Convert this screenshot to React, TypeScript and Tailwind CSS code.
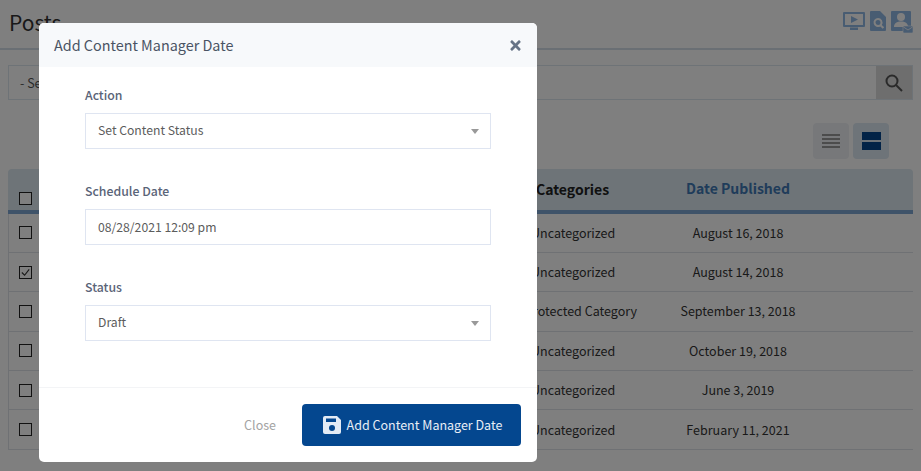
import { FaTimes } from 'react-icons/fa'

const rows = [
  { category: 'Uncategorized', date: 'August 16, 2018', checked: false, indent: 'pl-[14px]' },
  { category: 'Uncategorized', date: 'August 14, 2018', checked: true, indent: 'pl-[14px]' },
  { category: 'Protected Category', date: 'September 13, 2018', checked: false, indent: 'pl-[8px]' },
  { category: 'Uncategorized', date: 'October 19, 2018', checked: false, indent: 'pl-[14px]' },
  { category: 'Uncategorized', date: 'June 3, 2019', checked: false, indent: 'pl-[14px]' },
  { category: 'Uncategorized', date: 'February 11, 2021', checked: false, indent: 'pl-[14px]' },
]

function Checkbox({ checked = false }: { checked?: boolean }) {
  return (
    <span className="flex h-[13px] w-[13px] items-center justify-center border border-[#222] bg-[#fff]">
      {checked && (
        <svg viewBox="0 0 12 12" className="h-[11px] w-[11px]" fill="none" stroke="#333" strokeWidth="1.2">
          <path d="M2 6l3 3 5-6.500" />
        </svg>
      )}
    </span>
  )
}

function HeaderIcons() {
  return (
    <div className="flex items-start gap-[5px] text-[#90b8e4]">
      <svg width="22" height="19" viewBox="0 0 22 19" fill="currentColor" className="mt-[1px]">
        <path fillRule="evenodd" d="M1 0h20a1 1 0 0 1 1 1v13a1 1 0 0 1-1 1H1a1 1 0 0 1-1-1V1a1 1 0 0 1 1-1zm1 2v11h18V2zM8 4l7 3.500L8 11zM7 15.500h8V18H7z" />
      </svg>
      <svg width="16" height="20" viewBox="0 0 16 20" fill="currentColor">
        <path fillRule="evenodd" d="M1 0h9l6 6v13a1 1 0 0 1-1 1H1a1 1 0 0 1-1-1V1a1 1 0 0 1 1-1zm7 7a4.500 4.500 0 1 0 2.300 8.400l2.400 2.400 1.500-1.500-2.400-2.400A4.500 4.500 0 0 0 8 7zm0 2a2.500 2.500 0 1 1 0 5 2.500 2.500 0 0 1 0-5z" />
      </svg>
      <svg width="22" height="22" viewBox="0 0 22 22">
        <path fill="currentColor" d="M1 0h18a1 1 0 0 1 1 1v18a1 1 0 0 1-1 1H1a1 1 0 0 1-1-1V1a1 1 0 0 1 1-1z" />
        <circle cx="10" cy="6" r="4" fill="#fff" />
        <path fill="#fff" d="M3 16c0-4 3-5.500 7-5.500s7 1.500 7 5.500z" />
        <rect x="12" y="15" width="10" height="7" rx="1" fill="#90b8e4" stroke="#fff" strokeWidth="0.6" />
        <path d="M12.500 16l4.500 3 4.500-3" fill="none" stroke="#fff" strokeWidth="0.8" />
      </svg>
    </div>
  )
}

function PostsPage() {
  return (
    <div className="h-[471px] overflow-hidden bg-white text-[#222]">
      <div className="flex h-[50px] items-start justify-between border-b-2 border-[#d5dfe8] pl-[9px] pr-[8px] pt-[11px]">
        <h1 className="text-[21px] leading-[23px] text-[#333]">Posts</h1>
        <HeaderIcons />
      </div>

      <div className="mx-[8px] mt-[15px] flex h-[35px] border border-[#dde6ef]">
        <div className="flex-1 pl-[11px] text-[12.500px] leading-[33px] text-[#555]">- Select -</div>
        <div className="flex w-[36px] items-center justify-center bg-[#dcdcdc]">
          <svg width="18" height="18" viewBox="0 0 18 18" fill="none" stroke="#555" strokeWidth="2">
            <circle cx="7" cy="7" r="5.500" />
            <path d="M11 11l6 6" />
          </svg>
        </div>
      </div>

      <div className="mr-[32px] mt-[23px] flex justify-end gap-[4px]">
        <div className="flex h-[36px] w-[36px] flex-col items-center justify-center gap-[2px] rounded-[4px] bg-[#eef1f4]">
          <span className="h-[2px] w-[18px] bg-[#999]" />
          <span className="h-[2px] w-[18px] bg-[#999]" />
          <span className="h-[2px] w-[18px] bg-[#999]" />
          <span className="h-[2px] w-[18px] bg-[#999]" />
        </div>
        <div className="flex h-[36px] w-[36px] flex-col items-center justify-center gap-[2px] rounded-[4px] bg-[#dce8f2]">
          <span className="h-[8px] w-[19px] bg-[#04478f]" />
          <span className="h-[8px] w-[19px] bg-[#04478f]" />
        </div>
      </div>

      <div className="mx-[8px] mt-[10px] rounded-t-[4px]">
        <div className="flex h-[44.500px] items-center rounded-t-[4px] border-b-[4px] border-[#7fa6d2] bg-[#dce8f0] font-semibold">
          <div className="w-[508px] pl-[11px] pt-[18px]">
            <Checkbox />
          </div>
          <div className="w-[142px] pl-[20px] text-[14px] leading-[20px] text-[#222]">Categories</div>
          <div className="w-[160px] pb-[3px] text-center text-[14px] leading-[20px] text-[#3f78b5]">Date Published</div>
        </div>
        {rows.map((row) => (
          <div key={row.date} className="flex h-[39.400px] items-center border-b border-l border-[#dfe3e8] text-[12.500px]">
            <div className="w-[508px] pl-[10px]">
              <Checkbox checked={row.checked} />
            </div>
            <div className={`w-[142px] whitespace-nowrap leading-[20px] text-[#333] ${row.indent}`}>{row.category}</div>
            <div className="w-[158px] whitespace-nowrap text-center leading-[20px] text-[#333]">{row.date}</div>
          </div>
        ))}
      </div>
    </div>
  )
}

function Field({ label, value, select = false }: { label: string; value: string; select?: boolean }) {
  return (
    <div className="mb-[33px]">
      <label className="mb-[9px] block text-[12.300px] font-medium leading-[18px] text-[#5a6478]">{label}</label>
      <div className={`relative h-[36px] border border-[#dfe5f1] pl-[12px] text-[12.200px] text-[#5c5c5c] ${select ? 'leading-[33px]' : 'leading-[35px]'}`}>
        {value}
        {select && (
          <span className="absolute right-[11px] top-[15px] h-0 w-0 border-x-[4px] border-t-[5px] border-x-transparent border-t-[#999]" />
        )}
      </div>
    </div>
  )
}

function ScheduleModal() {
  return (
    <div className="absolute inset-0 bg-black/50 pl-[39px] pt-[23px]">
      <div className="flex h-[439px] w-[498px] flex-col overflow-hidden rounded-[5px] bg-white">
        <div className="flex h-[44px] items-center justify-between bg-[#f7f9fb] pl-[15px] pr-[14px]">
          <h2 className="text-[14.400px] leading-[20px] text-[#4a5464]">Add Content Manager Date</h2>
          <FaTimes className="h-[15px] w-[15px] text-[#667386]" />
        </div>
        <div className="h-[321px] border-b border-[#f3f4f6] px-[46px] pt-[19px]">
          <Field label="Action" value="Set Content Status" select />
          <Field label="Schedule Date" value="08/28/2021 12:09 pm" />
          <Field label="Status" value="Draft" select />
        </div>
        <div className="flex flex-1 items-start justify-end pr-[16px] pt-[16px]">
          <span className="mr-[26px] mt-[11px] text-[12.500px] leading-[20px] text-[#a3a3a3]">Close</span>
          <button className="flex h-[42px] w-[219px] items-center justify-center gap-[6px] rounded-[4px] bg-[#04478f] pl-[2px] text-[12.500px] text-[#e8eef6]">
            <svg width="18" height="18" viewBox="0 0 18 18">
              <path fill="#e3ebf5" d="M2 0h12l4 4v12a2 2 0 0 1-2 2H2a2 2 0 0 1-2-2V2a2 2 0 0 1 2-2z" />
              <rect x="3" y="2.500" width="10" height="3.500" fill="#04478f" />
              <circle cx="9" cy="12" r="3" fill="#04478f" />
            </svg>
            Add Content Manager Date
          </button>
        </div>
      </div>
    </div>
  )
}

export default function App() {
  return (
    <div className="relative h-[471px] w-[921px] overflow-hidden font-['Noto_Sans_CJK_SC',sans-serif]">
      <PostsPage />
      <ScheduleModal />
    </div>
  )
}
